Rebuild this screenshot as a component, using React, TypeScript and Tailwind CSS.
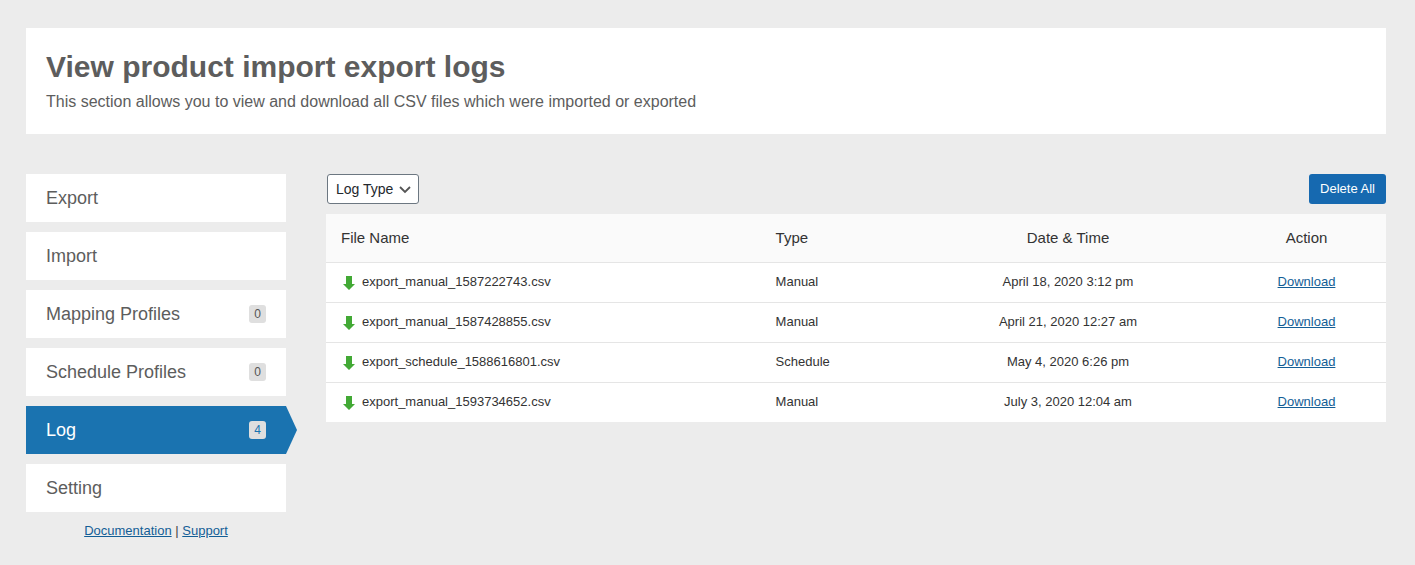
import { useState } from "react"

type NavItem = {
  id: string
  label: string
  count?: number
}

type LogEntry = {
  file: string
  type: string
  date: string
}

const navItems: NavItem[] = [
  { id: "export", label: "Export" },
  { id: "import", label: "Import" },
  { id: "mapping", label: "Mapping Profiles", count: 0 },
  { id: "schedule", label: "Schedule Profiles", count: 0 },
  { id: "log", label: "Log", count: 4 },
  { id: "setting", label: "Setting" },
]

const initialLogs: LogEntry[] = [
  { file: "export_manual_1587222743.csv", type: "Manual", date: "April 18, 2020 3:12 pm" },
  { file: "export_manual_1587428855.csv", type: "Manual", date: "April 21, 2020 12:27 am" },
  { file: "export_schedule_1588616801.csv", type: "Schedule", date: "May 4, 2020 6:26 pm" },
  { file: "export_manual_1593734652.csv", type: "Manual", date: "July 3, 2020 12:04 am" },
]

function ArrowDownIcon() {
  return (
    <svg width="12" height="14" viewBox="0 0 12 14" fill="#42a935" className="mt-[2px] shrink-0" aria-hidden="true">
      <path d="M3 0h6v8h3L6 14 0 8h3z" />
    </svg>
  )
}

function Sidebar() {
  const [active, setActive] = useState("log")

  return (
    <aside className="w-[260px] shrink-0">
      <nav className="flex flex-col gap-[10px]">
        {navItems.map((item) => {
          const isActive = item.id === active
          return (
            <a
              key={item.id}
              href={`#${item.id}`}
              onClick={() => setActive(item.id)}
              className={`relative flex h-12 items-center justify-between px-5 text-[18px] ${
                isActive ? "bg-[#1a73b0] text-white" : "bg-white text-[#5d5d5d]"
              }`}
            >
              {item.label}
              {item.count !== undefined && (
                <span
                  className={`flex h-[18px] w-[17px] items-center justify-center rounded-[3px] bg-[#dfdfdf] text-[12px] ${
                    isActive ? "text-[#1a73b0]" : "text-[#555555]"
                  }`}
                >
                  {item.count}
                </span>
              )}
              {isActive && (
                <span className="absolute top-0 left-full h-full w-[11px] bg-[#1a73b0] [clip-path:polygon(0_0,100%_50%,0_100%)]" />
              )}
            </a>
          )
        })}
      </nav>
      <p className="mt-[9px] text-center text-[13px] leading-5 text-[#444444]">
        <a href="#documentation" className="text-[#135e96] underline">
          Documentation
        </a>{" "}
        |{" "}
        <a href="#support" className="text-[#135e96] underline">
          Support
        </a>
      </p>
    </aside>
  )
}

function LogTable({ logs }: { logs: LogEntry[] }) {
  return (
    <table className="w-full table-fixed bg-white text-[13px] leading-5 text-[#333333]">
      <thead className="bg-[#fafafa] text-[15px]">
        <tr className="h-12 border-b border-[#e5e5e5]">
          <th className="w-[41%] px-[15px] text-left font-normal">File Name</th>
          <th className="w-[14%] px-[15px] text-left font-normal">Type</th>
          <th className="w-[30%] px-[15px] text-center font-normal">Date &amp; Time</th>
          <th className="w-[15%] px-[15px] text-center font-normal">Action</th>
        </tr>
      </thead>
      <tbody>
        {logs.map((log) => (
          <tr key={log.file} className="h-10 border-b border-[#e5e5e5] last:border-b-0">
            <td className="px-[15px]">
              <span className="flex items-center gap-[7px] pl-[2px]">
                <ArrowDownIcon />
                {log.file}
              </span>
            </td>
            <td className="px-[15px]">{log.type}</td>
            <td className="px-[15px] text-center">{log.date}</td>
            <td className="px-[15px] text-center">
              <a href={`#${log.file}`} className="text-[#135e96] underline">
                Download
              </a>
            </td>
          </tr>
        ))}
      </tbody>
    </table>
  )
}

export default function App() {
  const [logs, setLogs] = useState(initialLogs)
  const [logType, setLogType] = useState("all")

  const visibleLogs = logs.filter((log) => logType === "all" || log.type.toLowerCase() === logType)

  return (
    <div className="min-h-screen bg-[#ececec] pt-7 pr-[29px] pb-6 pl-[26px] font-['Liberation_Sans',Arial,sans-serif]">
      <header className="bg-white p-5">
        <h1 className="text-[30px] leading-[38px] font-bold text-[#5d5d5d]">View product import export logs</h1>
        <p className="mt-1 text-[16px] leading-6 text-[#5d5d5d]">
          This section allows you to view and download all CSV files which were imported or exported
        </p>
      </header>

      <div className="mt-10 flex gap-10">
        <Sidebar />
        <main className="min-w-0 flex-1">
          <div className="mb-[10px] flex items-center justify-between">
            <div className="relative ml-px">
              <select
                aria-label="Log Type"
                value={logType}
                onChange={(e) => setLogType(e.target.value)}
                className="h-[30px] w-[92px] appearance-none rounded-[3px] border border-[#6c7781] bg-white pr-6 pl-2 text-[14px] text-[#23282d]"
              >
                <option value="all">Log Type</option>
                <option value="manual">Manual</option>
                <option value="schedule">Schedule</option>
              </select>
              <svg
                width="12"
                height="8"
                viewBox="0 0 12 8"
                fill="none"
                stroke="#555555"
                strokeWidth="1.8"
                className="pointer-events-none absolute top-3 right-2"
                aria-hidden="true"
              >
                <path d="M1 1l5 5 5-5" />
              </svg>
            </div>
            <button
              type="button"
              onClick={() => setLogs([])}
              className="h-[30px] w-[77px] rounded-[3px] bg-[#1669b0] text-[13px] whitespace-nowrap text-white"
            >
              Delete All
            </button>
          </div>
          <LogTable logs={visibleLogs} />
        </main>
      </div>
    </div>
  )
}
